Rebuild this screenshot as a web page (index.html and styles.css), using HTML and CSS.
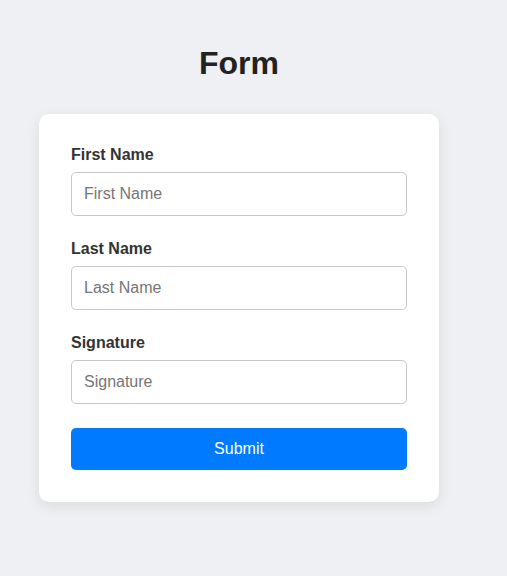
FILE: index.html
```html
<!DOCTYPE html>
<html>
<head>
<meta charset="utf-8">
<link rel="stylesheet" href="styles.css">
</head>
<body>
<div class="page">
  <h1 class="title">Form</h1>
  <form class="card">
    <div class="field">
      <label class="label" for="fn">First Name</label>
      <input class="input" id="fn" type="text" placeholder="First Name">
    </div>
    <div class="field">
      <label class="label" for="ln">Last Name</label>
      <input class="input" id="ln" type="text" placeholder="Last Name">
    </div>
    <div class="field">
      <label class="label" for="sig">Signature</label>
      <input class="input" id="sig" type="text" placeholder="Signature">
    </div>
    <button class="submit" type="button">Submit</button>
  </form>
</div>
</body>
</html>
```
FILE: styles.css
```css
html, body {
  margin: 0;
  padding: 0;
  background: #eef0f4;
  font-family: "Liberation Sans", Arial, sans-serif;
}
.page {
  width: 400px;
  padding: 45px 0 40px 39px;
}
.title {
  margin: 0 0 32px;
  font-size: 32px;
  font-weight: bold;
  text-align: center;
  color: #222;
  line-height: 37px;
}
.card {
  background: #fff;
  border-radius: 10px;
  box-shadow: 0 4px 14px rgba(0, 0, 0, 0.09);
  padding: 32px;
  display: flex;
  flex-direction: column;
}
.field {
  display: flex;
  flex-direction: column;
  margin-bottom: 24px;
}
.label {
  font-size: 16px;
  font-weight: bold;
  color: #333;
  line-height: 18px;
  margin-bottom: 8px;
}
.input {
  box-sizing: border-box;
  height: 44px;
  padding: 0 12px;
  border: 1px solid #c8c8c8;
  border-radius: 5px;
  font-family: inherit;
  font-size: 16px;
  color: #333;
  outline: none;
}
.input::placeholder {
  color: #757575;
}
.submit {
  height: 42px;
  border: none;
  border-radius: 5px;
  background: #007bff;
  color: #fff;
  font-family: inherit;
  font-size: 16px;
  cursor: pointer;
}
```
